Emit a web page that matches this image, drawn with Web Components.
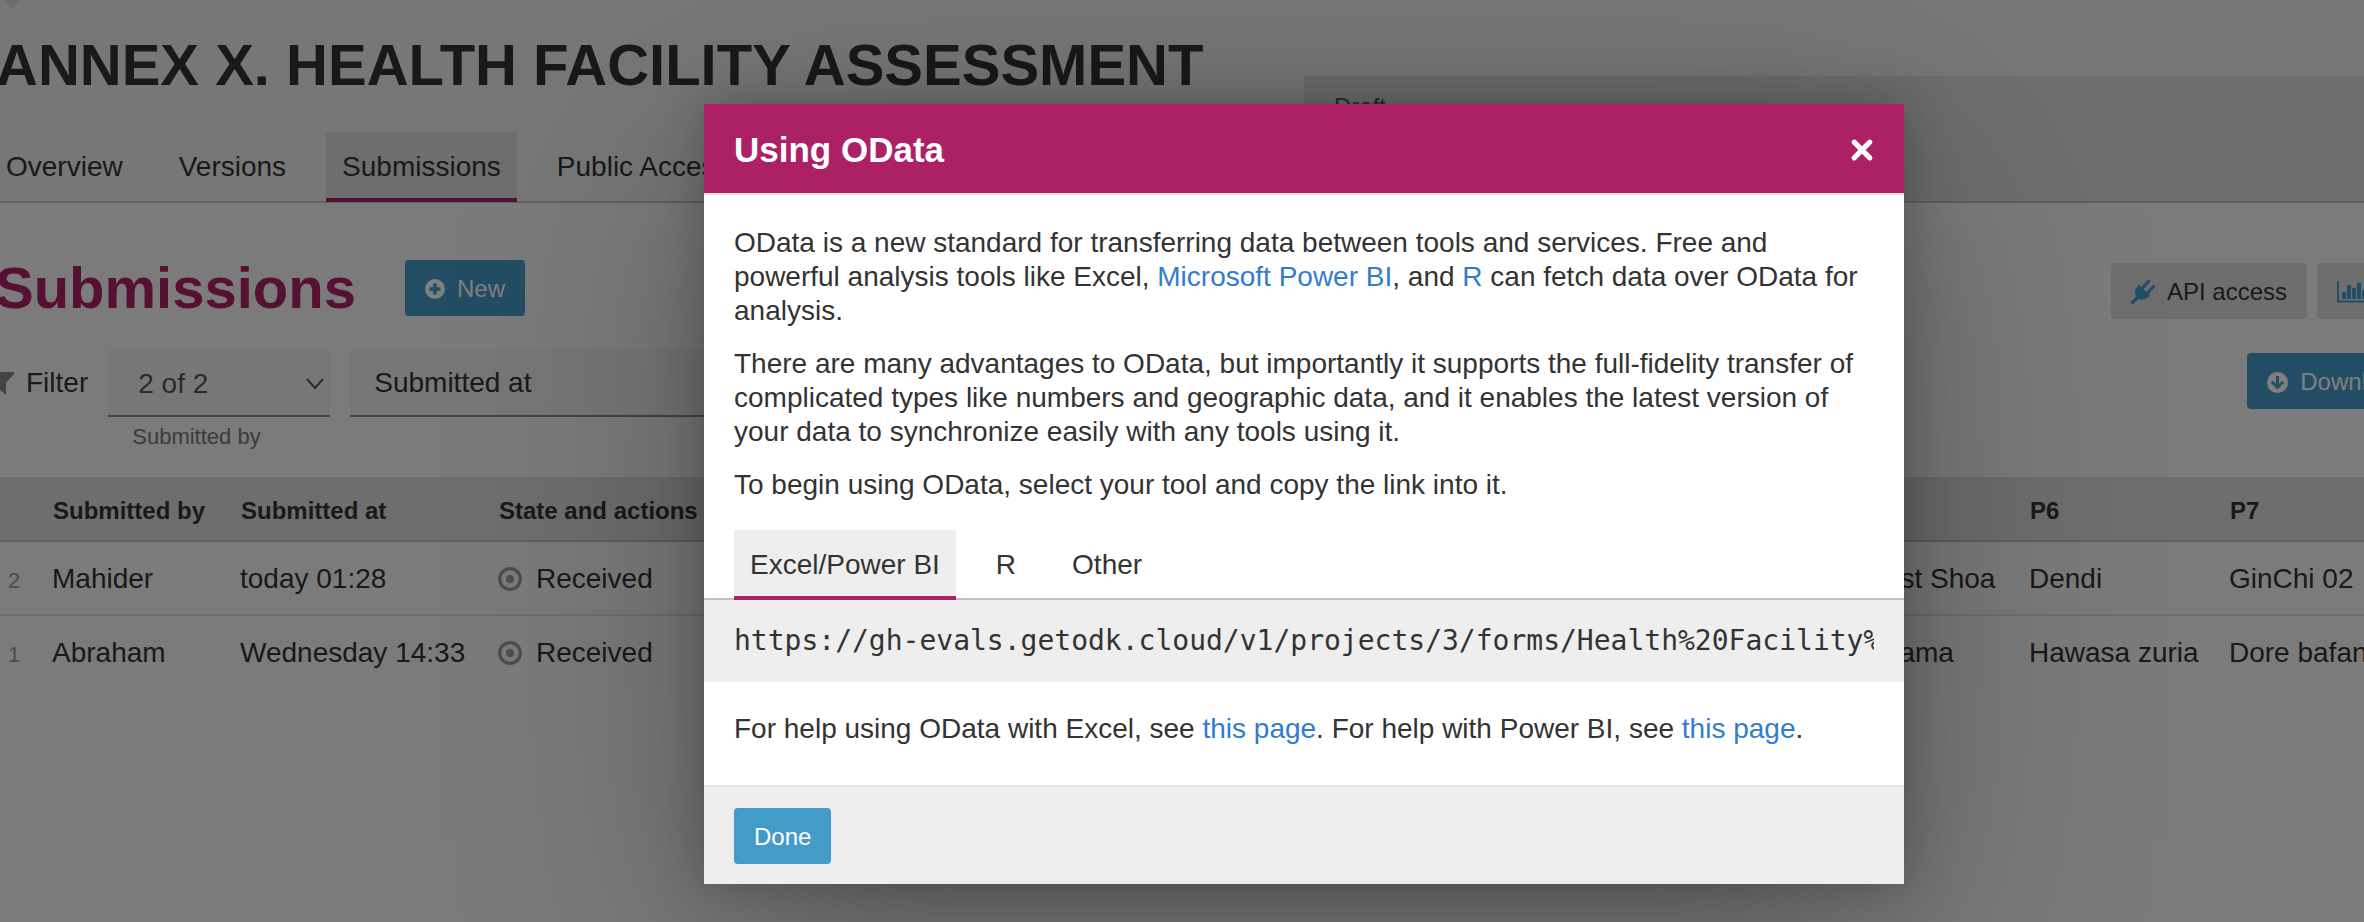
<!DOCTYPE html>
<html lang="en">
<head>
<meta charset="utf-8">
<title>ODK Central</title>
<style>
html, body { margin: 0; height: 100%; }
body { font: 28px/34px "Liberation Sans", Arial, sans-serif; color: #333; background: #f7f7f7; overflow: hidden; }
</style>
</head>
<body>
<central-app></central-app>
<script>
const icons = {
  plus: ['0 0 20 20', '<circle cx="10" cy="10" r="10" fill="currentColor"/><path d="M10 4.600v10.800M4.600 10h10.800" stroke="var(--hole)" stroke-width="3.600"/>'],
  down: ['0 0 21 21', '<circle cx="10.500" cy="10.500" r="10.500" fill="currentColor"/><path d="M10.500 4v11M4.800 9.800l5.700 5.700 5.700-5.700" fill="none" stroke="var(--hole)" stroke-width="3"/>'],
  plug: ['0 0 24 24', '<path d="M1.500 22.500L8 16M11 8.500l6.500-7M16 13.500l6.500-7" stroke="currentColor" stroke-width="3.200" stroke-linecap="round"/><path d="M7.500 4.500L19.500 16l-2 .6c-3 3.600-7.500 4.200-11 1.400C3 14.500 3.200 9.800 6.800 6.600z" fill="currentColor"/>'],
  chart: ['0 0 30 22', '<path d="M1 0v20.500h29" fill="none" stroke="currentColor" stroke-width="2"/><path d="M5 11h4v7H5zM10 4h4v14h-4zM15 7h4v11h-4zM20 2h4v16h-4zM25 9h4v9h-4z" fill="currentColor"/>'],
  filter: ['0 0 22 24', '<path d="M0 1h22v2l-8 9v12l-6-5v-7L0 3z" fill="currentColor"/>'],
  dot: ['0 0 24 24', '<circle cx="12" cy="12" r="10.300" fill="none" stroke="currentColor" stroke-width="3.200"/><circle cx="12" cy="12" r="4" fill="currentColor"/>'],
  close: ['0 0 24 24', '<path d="M4.200 4.200l15.600 15.600M19.800 4.200L4.200 19.800" stroke="currentColor" stroke-width="5.200" stroke-linecap="round"/>']
};

function define(name, html, setup) {
  const template = document.createElement('template');
  template.innerHTML = '<style>*{box-sizing:border-box}</style>' + html;
  customElements.define(name, class extends HTMLElement {
    constructor() {
      super();
      this.attachShadow({ mode: 'open' }).append(template.content.cloneNode(true));
    }
    connectedCallback() { if (setup) setup(this, this.shadowRoot); }
  });
}

define('ui-icon', `<style>
:host { display: inline-flex; flex: none; width: 24px; }
svg { width: 100%; display: block; }
</style><svg aria-hidden="true"></svg>`, (host, root) => {
  const [box, body] = icons[host.getAttribute('name')];
  const svg = root.querySelector('svg');
  svg.setAttribute('viewBox', box);
  svg.innerHTML = body;
});

define('ui-button', `<style>
:host { display: inline-flex; flex: none; }
button { display: flex; align-items: center; gap: 12px; height: 56px; padding: 2px 20px 0; border: 0; border-radius: 4px;
  background: #459bc8; --hole: #459bc8; color: #fff; font: 24px/34px "Liberation Sans", Arial, sans-serif; white-space: nowrap; }
:host([plain]) button { background: #ddd; color: #333; }
:host([plain]) ::slotted(ui-icon) { color: #459bc8; }
</style><button type="button"><slot></slot></button>`, (host, root) => {
  const label = host.getAttribute('label');
  if (label) root.querySelector('button').setAttribute('aria-label', label);
});

define('nav-tabs', `<style>
:host { display: block; }
nav { display: flex; gap: 24px; }
::slotted(ui-tab) { flex: none; }
</style><nav><slot></slot></nav>`);

define('ui-tab', `<style>
:host { display: block; }
a { display: block; height: 70px; padding: 7px 16px 0; line-height: 56px; border-bottom: 4px solid transparent; color: inherit; text-decoration: none; white-space: nowrap; }
:host([active]) a { background: var(--tab, #ddd); border-color: #ac2166; }
</style><a href="#"><slot></slot></a>`);

define('page-head', `<style>
:host { display: flex; justify-content: space-between; height: 203px; background: #eee; border-bottom: 2px solid #c3c3c3; position: relative; }
.main { display: flex; flex-direction: column; justify-content: space-between; margin-left: -4px; }
h1 { margin: 30px 0 0; font-size: 58px; line-height: 70px; white-space: nowrap; }
nav-tabs { margin: 0 0 -1px -6px; }
.draft { width: 1060px; margin-top: 76px; padding: 17px 30px; background: #ddd; font-size: 24px; line-height: 28px; color: #555; }
.notch { position: absolute; left: 4px; top: 0; border: 8px solid transparent; border-top: 10px solid #ddd; border-bottom: 0; }
</style>
<span class="notch"></span>
<div class="main">
  <h1>ANNEX X. HEALTH FACILITY ASSESSMENT</h1>
  <nav-tabs><ui-tab>Overview</ui-tab><ui-tab>Versions</ui-tab><ui-tab active>Submissions</ui-tab><ui-tab>Public Access</ui-tab></nav-tabs>
</div>
<div class="draft">Draft</div>`);

define('submission-filters', `<style>
:host { display: flex; align-items: flex-start; }
.title { display: flex; align-items: center; gap: 12px; height: 68px; margin: 0 20px 0 0; }
.title ui-icon { width: 22px; color: #888; }
label { display: flex; flex-direction: column; width: 222px; margin-right: 20px; font-size: 22px; line-height: 30px; color: #777; }
.field { display: block; position: relative; }
label span { padding: 5px 24px 0; }
select, input { width: 100%; height: 68px; padding: 4px 30px 0; border: 0; border-bottom: 2px solid #888; border-radius: 0; background: #eee; appearance: none; font: 28px/34px "Liberation Sans", Arial, sans-serif; color: #555; }
input { width: 400px; padding: 2px 24px 0; color: #333; }
input::placeholder { color: #333; opacity: 1; }
svg { position: absolute; right: 6px; top: 29px; width: 18px; height: 12px; }
</style>
<div class="title"><ui-icon name="filter"></ui-icon>Filter</div>
<label><div class="field"><select><option>2 of 2</option></select><svg viewBox="0 0 18 12"><path d="M1 1l8 9 8-9" fill="none" stroke="#555" stroke-width="2"/></svg></div><span>Submitted by</span></label>
<input aria-label="Submitted at" placeholder="Submitted at">`);

define('submission-table', `<style>
:host { display: block; }
table { border-collapse: separate; border-spacing: 0; table-layout: fixed; width: 100%; white-space: nowrap; }
th { height: 65px; padding: 4px 17px 0; text-align: left; font-size: 24px; background: #ddd; border-bottom: 2px solid #bbb; }
td { height: 74px; padding: 2px 16px 0; border-bottom: 2px solid #ddd; }
tbody tr:last-child td { border-color: transparent; }
td:first-child { padding: 6px 8px 0; font-size: 22px; color: #999; }
.state { display: flex; align-items: center; gap: 14px; }
.state ui-icon { color: #999; }
</style>
<table>
<colgroup><col style="width:36px"><col style="width:188px"><col style="width:258px"><col><col style="width:170px"><col style="width:200px"><col style="width:151px"></colgroup>
<thead><tr><th></th><th>Submitted by</th><th>Submitted at</th><th>State and actions</th><th></th><th>P6</th><th>P7</th></tr></thead>
<tbody>
<tr><td>2</td><td>Mahider</td><td>today 01:28</td><td><div class="state"><ui-icon name="dot"></ui-icon>Received</div></td><td>West Shoa</td><td>Dendi</td><td>GinChi 02</td></tr>
<tr><td>1</td><td>Abraham</td><td>Wednesday 14:33</td><td><div class="state"><ui-icon name="dot"></ui-icon>Received</div></td><td>Sidama</td><td>Hawasa zuria</td><td>Dore bafano</td></tr>
</tbody></table>`);

define('submission-list', `<style>
:host { display: block; }
.heading, .bar { display: flex; justify-content: space-between; align-items: flex-start; }
.heading { padding-top: 57px; height: 146px; }
.left { display: flex; align-items: center; gap: 49px; margin-left: -5px; }
h2 { margin: 0; font-size: 58px; line-height: 56px; color: #ac2166; }
.right { display: flex; gap: 10px; margin: 3px -23px 0 0; }
.bar { height: 128px; }
submission-filters { margin-left: -8px; }
.bar > ui-button { margin: 4px -63px 0 0; }
.heading ui-icon[name=plus] { width: 20px; }
ui-icon[name=down] { width: 21px; }
ui-icon[name=chart] { width: 30px; }
</style>
<div class="heading">
  <div class="left"><h2>Submissions</h2><ui-button><ui-icon name="plus"></ui-icon>New</ui-button></div>
  <div class="right"><ui-button plain><ui-icon name="plug"></ui-icon>API access</ui-button><ui-button plain label="Analyze"><ui-icon name="chart"></ui-icon></ui-button></div>
</div>
<div class="bar"><submission-filters></submission-filters><ui-button><ui-icon name="down"></ui-icon>Download</ui-button></div>
<submission-table></submission-table>`);

define('odata-modal', `<style>
:host { position: absolute; inset: 0; display: flex; justify-content: center; align-items: flex-start; padding: 104px 0 0 244px; background: rgba(0,0,0,.5); }
section { width: 1200px; background: #fff; box-shadow: 0 0 48px rgba(0,0,0,.25), 0 70px 230px rgba(0,0,0,.28); }
header { display: flex; justify-content: space-between; align-items: center; height: 91px; padding: 2px 30px 0; background: #ac2166; color: #fff; border-bottom: 2px solid #e5e5e5; }
h4 { margin: 0; font-size: 35px; line-height: 40px; }
header button { display: flex; padding: 0; border: 0; background: none; color: #fff; }
header ui-icon { width: 24px; }
.intro { padding: 31px 30px 0; }
p { margin: 0 0 19px; }
a { color: #337ccc; text-decoration: none; }
nav-tabs { --tab: #eee; margin: 28px 0 -2px; position: relative; padding: 0 30px; }
.url { border-top: 2px solid #c0c0c0; background: #eee; padding: 0 30px; }
.url div { height: 82px; line-height: 82px; overflow: hidden; white-space: nowrap; font-family: "DejaVu Sans Mono", monospace; }
.help { margin: 0; padding: 30px 30px 39px; }
footer { display: flex; height: 99px; align-items: center; padding: 0 30px; background: #eee; border-top: 2px solid #e5e5e5; }
</style>
<section role="dialog" aria-label="Using OData">
<header><h4>Using OData</h4><button type="button" aria-label="Close"><ui-icon name="close"></ui-icon></button></header>
<div class="intro">
<p>OData is a new standard for transferring data between tools and services. Free and powerful analysis tools like Excel, <a href="#">Microsoft Power BI</a>, and <a href="#">R</a> can fetch data over OData for analysis.</p>
<p>There are many advantages to OData, but importantly it supports the full-fidelity transfer of complicated types like numbers and geographic data, and it enables the latest version of your data to synchronize easily with any tools using it.</p>
<p>To begin using OData, select your tool and copy the link into it.</p>
</div>
<nav-tabs><ui-tab active>Excel/Power BI</ui-tab><ui-tab>R</ui-tab><ui-tab>Other</ui-tab></nav-tabs>
<div class="url"><div>https://gh-evals.getodk.cloud/v1/projects/3/forms/Health%20Facility%</div></div>
<p class="help">For help using OData with Excel, see <a href="#">this page</a>. For help with Power BI, see <a href="#">this page</a>.</p>
<footer><ui-button>Done</ui-button></footer>
</section>`);

define('central-app', `<style>
:host { display: block; position: relative; min-height: 100%; overflow: hidden; }
</style>
<page-head></page-head>
<submission-list></submission-list>
<odata-modal></odata-modal>`);
</script>
</body>
</html>
